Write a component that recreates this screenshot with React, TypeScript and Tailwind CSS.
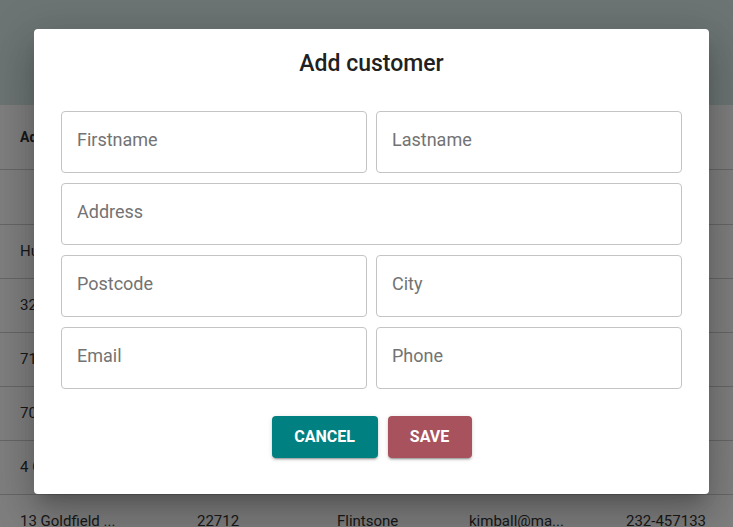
import React from "react";

const rows = [
  ["", "", "", "", ""],
  ["Hummingbird Ln", "12345", "Springfield", "homer@mail.com", "555-1234"],
  ["32 Evergreen Terrace", "10101", "Bedrock", "fred@mail.com", "232-1112"],
  ["71 Oak Street", "33214", "Shelbyville", "ned@mail.com", "232-9988"],
  ["70 Rock Road", "44120", "Bedrock", "barney@mail.com", "232-4433"],
  ["4 Granite Way", "22710", "Flintsone", "wilma@mail.com", "232-6655"],
  ["13 Goldfield ...", "22712", "Flintsone", "kimball@ma...", "232-457133"],
];

const cols = "grid grid-cols-[177px_140px_132px_157px_1fr] pl-5 items-center";

function Field({ label }: { label: string }) {
  return (
    <input
      placeholder={label}
      className="h-[62px] w-full rounded border border-[#c4c4c4] bg-white px-[15px] pb-[6px] text-[18px] text-[#212121] placeholder:text-[#737373] outline-none"
    />
  );
}

export default function App() {
  return (
    <div className="relative h-[527px] w-[733px] overflow-hidden bg-white font-['Roboto',sans-serif]">
      {/* page behind the dialog */}
      <div className="h-[105px] bg-[#d9ebe9]" />
      <div>
        <div className={`${cols} h-[65px] border-b border-[#cfcfcf] text-[14px] font-bold text-[#333]`}>
          <span>Address</span>
          <span>Postcode</span>
          <span>City</span>
          <span>Email</span>
          <span>Phone</span>
        </div>
        {rows.map((r, i) => (
          <div
            key={i}
            className={`${cols} ${i === 0 ? "h-[55px]" : "h-[54px]"} border-b border-[#cfcfcf] text-[15px] text-[#333]`}
          >
            {r.map((c, j) => (
              <span key={j} className="truncate">
                {c}
              </span>
            ))}
          </div>
        ))}
      </div>

      {/* backdrop + dialog */}
      <div className="absolute inset-0 bg-black/50 pl-[34px] pt-[29px]">
        <div className="w-[675px] h-[465px] rounded bg-white shadow-[0_11px_15px_-7px_rgba(0,0,0,0.2),0_24px_38px_3px_rgba(0,0,0,0.14),0_9px_46px_8px_rgba(0,0,0,0.12)] px-[27px] pt-[21px]">
          <h2 className="text-center text-[23px] font-medium leading-[28px] text-[#212121]">
            Add customer
          </h2>
          <div className="mt-[33px] grid grid-cols-2 gap-x-[9px] gap-y-[10px]">
            <Field label="Firstname" />
            <Field label="Lastname" />
            <div className="col-span-2">
              <Field label="Address" />
            </div>
            <Field label="Postcode" />
            <Field label="City" />
            <Field label="Email" />
            <Field label="Phone" />
          </div>
          <div className="mt-[27px] flex justify-center gap-[10px]">
            <button className="h-[42px] w-[106px] rounded bg-[#008080] text-[16px] font-bold uppercase text-white shadow-[0_3px_1px_-2px_rgba(0,0,0,0.2),0_2px_2px_0_rgba(0,0,0,0.14),0_1px_5px_0_rgba(0,0,0,0.12)]">
              Cancel
            </button>
            <button className="h-[42px] w-[84px] rounded bg-[#a8525e] text-[16px] font-bold uppercase text-white shadow-[0_3px_1px_-2px_rgba(0,0,0,0.2),0_2px_2px_0_rgba(0,0,0,0.14),0_1px_5px_0_rgba(0,0,0,0.12)]">
              Save
            </button>
          </div>
        </div>
      </div>
    </div>
  );
}
